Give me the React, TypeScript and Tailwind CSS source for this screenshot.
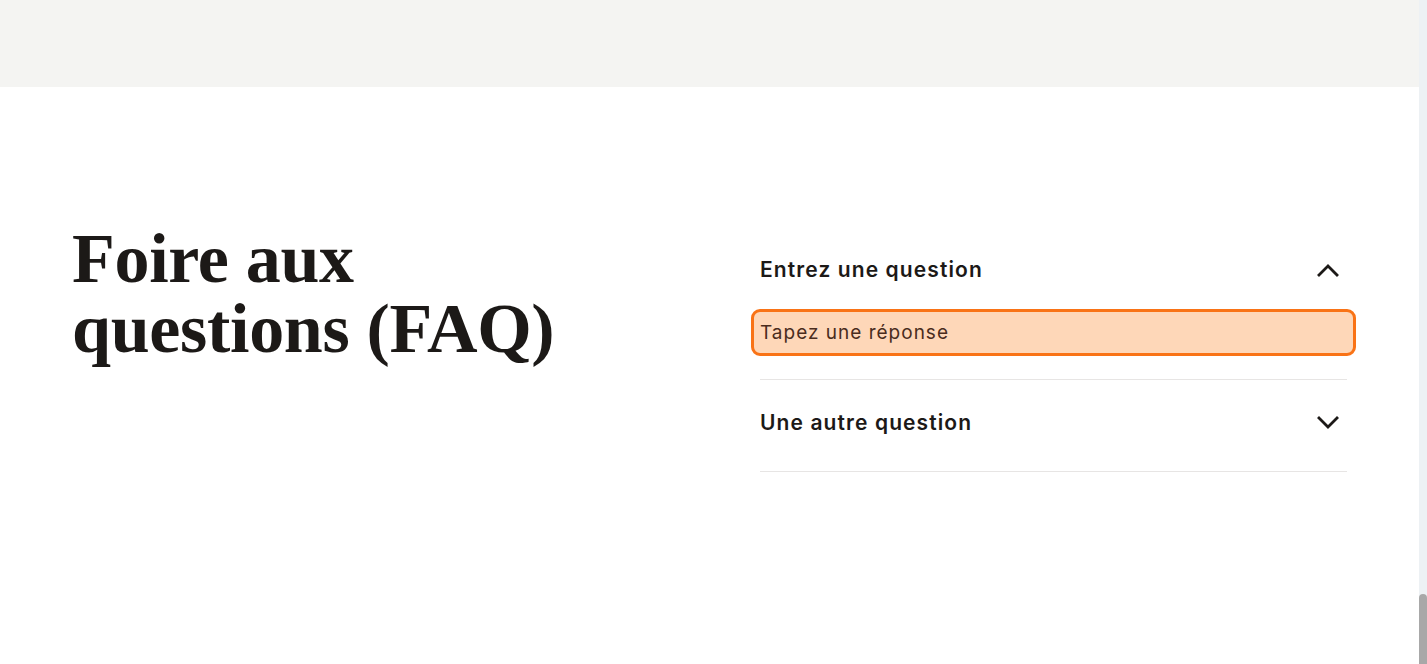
const serif = { fontFamily: '"Liberation Serif", "DejaVu Serif", serif' };

function Chevron({ up }: { up: boolean }) {
  return (
    <svg width="22" height="14" viewBox="0 0 22 14" className="mr-[8px] text-[#1c1917]">
      <polyline
        points={up ? "2,12 11,3 20,12" : "2,2 11,11 20,2"}
        fill="none"
        stroke="currentColor"
        strokeWidth="2.8"
        strokeLinecap="square"
      />
    </svg>
  );
}

function Question({ label, open }: { label: string; open: boolean }) {
  return (
    <div className="flex h-[28px] items-center justify-between">
      <span className="text-[21px] font-semibold leading-[28px] tracking-[1.1px] text-[#1c1917] [font-family:Inter,'Noto_Sans',sans-serif]">
        {label}
      </span>
      <Chevron up={open} />
    </div>
  );
}

export default function App() {
  return (
    <div className="flex h-[664px] w-full overflow-hidden bg-white">
      <div className="flex min-w-0 flex-1 flex-col">
        <div className="h-[87px] shrink-0 bg-[#f4f4f2]" />
        <section className="flex flex-1 pl-[72px] pt-[137px]">
          <h1
            style={serif}
            className="w-[688px] shrink-0 text-[70px] font-bold leading-[70px] tracking-[-0.3px] text-[#1c1917]"
          >
            Foire aux
            <br />
            questions (FAQ)
          </h1>
          <div className="flex w-[587px] flex-col pt-[32px]">
            <div className="border-b border-[#e7e5e4] pb-[23px]">
              <Question label="Entrez une question" open />
              <div className="-ml-[9px] -mr-[9px] mt-[25px] rounded-[9px] border-[3px] border-[#f97316] bg-[#fed7b8] px-[6px] py-[8px] text-[19px] leading-[25px] tracking-[1px] text-[#4a2c1d] [font-family:Inter,'Noto_Sans',sans-serif]">
                Tapez une réponse
              </div>
            </div>
            <div className="border-b border-[#e7e5e4] pb-[34px] pt-[29px]">
              <Question label="Une autre question" open={false} />
            </div>
          </div>
        </section>
      </div>
      <div className="flex w-[8px] shrink-0 flex-col justify-end bg-[#edf1f4]">
        <div className="h-[70px] rounded-t-[4px] bg-[#a8a8a8]" />
      </div>
    </div>
  );
}
